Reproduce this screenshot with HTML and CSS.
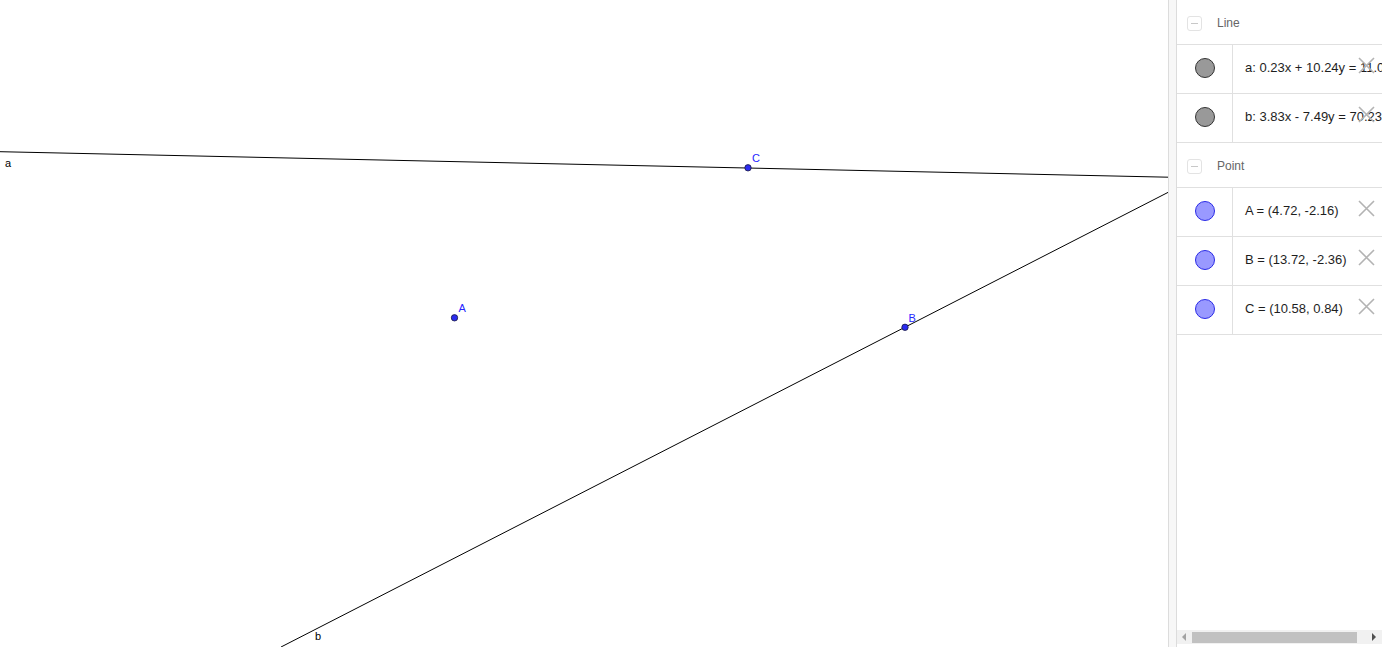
FILE: index.html
```html
<!DOCTYPE html>
<html>
<head>
<meta charset="utf-8">
<link rel="stylesheet" href="styles.css">
</head>
<body>
<div class="app">
  <div class="graphics">
    <svg class="plot" width="1168" height="647" viewBox="0 0 1168 647">
      <line x1="0" y1="151.7" x2="1168" y2="177.2" stroke="#000" stroke-width="1"/>
      <line x1="281" y1="647" x2="1168" y2="192.4" stroke="#000" stroke-width="1"/>
      <text x="5" y="167" class="lbl-line">a</text>
      <text x="315" y="640" class="lbl-line">b</text>
      <circle cx="748" cy="167.8" r="3.2" class="pt"/>
      <circle cx="454.5" cy="317.8" r="3.2" class="pt"/>
      <circle cx="905" cy="327.3" r="3.2" class="pt"/>
      <text x="752" y="162" class="lbl-pt">C</text>
      <text x="458.5" y="312" class="lbl-pt">A</text>
      <text x="908.5" y="322" class="lbl-pt">B</text>
    </svg>
  </div>
  <div class="splitter"></div>
  <div class="algebra">
    <div class="list">
      <div class="group-head">
        <span class="toggle"><span class="minus"></span></span>
        <span class="group-name">Line</span>
      </div>
      <div class="item">
        <div class="marble-cell"><span class="marble marble-line"></span></div>
        <div class="def">a: 0.23x + 10.24y = 11.03</div>
        <svg class="del" width="17" height="17" viewBox="0 0 17 17"><path d="M1 1 L16 16 M16 1 L1 16"/></svg>
      </div>
      <div class="item">
        <div class="marble-cell"><span class="marble marble-line"></span></div>
        <div class="def">b: 3.83x - 7.49y = 70.23</div>
        <svg class="del" width="17" height="17" viewBox="0 0 17 17"><path d="M1 1 L16 16 M16 1 L1 16"/></svg>
      </div>
      <div class="group-head">
        <span class="toggle"><span class="minus"></span></span>
        <span class="group-name">Point</span>
      </div>
      <div class="item">
        <div class="marble-cell"><span class="marble marble-pt"></span></div>
        <div class="def">A = (4.72, -2.16)</div>
        <svg class="del" width="17" height="17" viewBox="0 0 17 17"><path d="M1 1 L16 16 M16 1 L1 16"/></svg>
      </div>
      <div class="item">
        <div class="marble-cell"><span class="marble marble-pt"></span></div>
        <div class="def">B = (13.72, -2.36)</div>
        <svg class="del" width="17" height="17" viewBox="0 0 17 17"><path d="M1 1 L16 16 M16 1 L1 16"/></svg>
      </div>
      <div class="item">
        <div class="marble-cell"><span class="marble marble-pt"></span></div>
        <div class="def">C = (10.58, 0.84)</div>
        <svg class="del" width="17" height="17" viewBox="0 0 17 17"><path d="M1 1 L16 16 M16 1 L1 16"/></svg>
      </div>
    </div>
    <div class="hscroll">
      <span class="arrow arrow-left"></span>
      <span class="thumb"></span>
      <span class="arrow arrow-right"></span>
    </div>
  </div>
</div>
</body>
</html>
```
FILE: styles.css
```css
html, body {
  margin: 0;
  padding: 0;
  background: #fff;
  overflow: hidden;
}
.app {
  display: flex;
  width: 1382px;
  height: 647px;
  font-family: "Liberation Sans", Arial, sans-serif;
}
.graphics {
  width: 1168px;
  height: 647px;
  flex: none;
  overflow: hidden;
  background: #fff;
}
.plot {
  display: block;
}
.lbl-line {
  font-family: "Liberation Sans", Arial, sans-serif;
  font-size: 11px;
  fill: #000;
}
.lbl-pt {
  font-family: "Liberation Sans", Arial, sans-serif;
  font-size: 11px;
  fill: #2626ff;
}
.pt {
  fill: #2b2bf0;
  stroke: #1a1a40;
  stroke-width: 0.8;
}
.splitter {
  width: 7px;
  flex: none;
  height: 647px;
  background: #f7f7f7;
  border-left: 1px solid #dcdcdc;
  border-right: 1px solid #dcdcdc;
}
.algebra {
  width: 205px;
  flex: none;
  height: 647px;
  display: flex;
  flex-direction: column;
  overflow: hidden;
  background: #fff;
}
.list {
  flex: 1;
  overflow: hidden;
}
.group-head {
  height: 45px;
  border-bottom: 1px solid #e0e0e0;
  display: flex;
  align-items: center;
  padding-left: 10px;
  box-sizing: border-box;
}
.toggle {
  width: 13px;
  height: 13px;
  border: 1px solid #e3e3e3;
  border-radius: 3px;
  display: flex;
  align-items: center;
  justify-content: center;
  margin-top: 3px;
}
.minus {
  width: 7px;
  height: 1px;
  background: #c8c8c8;
}
.group-name {
  margin-left: 15px;
  font-size: 12px;
  color: #666;
  margin-top: 1px;
}
.item {
  position: relative;
  height: 49px;
  border-bottom: 1px solid #e0e0e0;
  box-sizing: border-box;
  display: flex;
}
.marble-cell {
  width: 56px;
  flex: none;
  border-right: 1px solid #e0e0e0;
  box-sizing: border-box;
  display: flex;
  align-items: center;
  justify-content: center;
  padding-bottom: 2px;
}
.marble {
  width: 18px;
  height: 18px;
  border-radius: 50%;
  box-sizing: content-box;
}
.marble-line {
  background: #999;
  border: 1px solid #333;
}
.marble-pt {
  background: #9999ff;
  border: 1px solid #2a2ae6;
}
.def {
  padding-left: 12px;
  padding-bottom: 3px;
  display: flex;
  align-items: center;
  font-size: 13px;
  color: #1e1e1e;
  white-space: nowrap;
  overflow: hidden;
  flex: 1;
}
.del {
  position: absolute;
  right: 7px;
  top: 12px;
}
.del path {
  stroke: #b3b3b3;
  stroke-width: 1.6;
  fill: none;
}
.hscroll {
  height: 14px;
  margin-bottom: 3px;
  background: #f1f1f1;
  display: flex;
  align-items: center;
  flex: none;
}
.arrow {
  width: 0;
  height: 0;
  border-top: 4px solid transparent;
  border-bottom: 4px solid transparent;
}
.arrow-left {
  border-right: 4px solid #a3a3a3;
  margin-left: 5px;
}
.arrow-right {
  border-left: 4px solid #505050;
  margin-right: 6px;
}
.thumb {
  height: 11px;
  background: #c1c1c1;
  margin-left: 6px;
  margin-right: 15px;
  flex: 1;
}
```
